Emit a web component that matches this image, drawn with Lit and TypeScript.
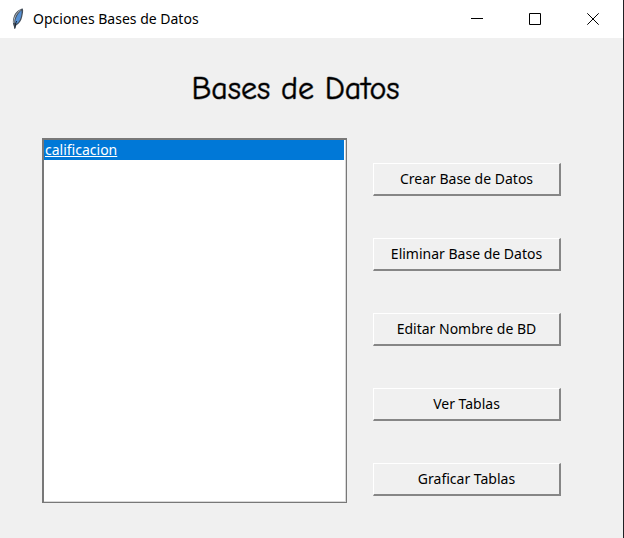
import { LitElement, html, css } from "lit";
import { customElement, state } from "lit/decorators.js";

const ACTIONS = [
  "Crear Base de Datos",
  "Eliminar Base de Datos",
  "Editar Nombre de BD",
  "Ver Tablas",
  "Graficar Tablas",
];

@customElement("title-bar")
class TitleBar extends LitElement {
  static styles = css`
    :host {
      display: flex;
      align-items: center;
      height: 38px;
      padding-right: 1px;
      background: #fff;
      color: #000;
    }
    .feather {
      flex: none;
      width: 16px;
      height: 22px;
      margin: 0 7px 0 10px;
    }
    .caption {
      flex: 1;
      font: 14px/20px "Noto Sans", "Open Sans", sans-serif;
      white-space: nowrap;
    }
    .control {
      display: flex;
      align-items: center;
      justify-content: center;
      width: 58px;
      height: 38px;
      padding: 0;
      border: 0;
      background: none;
    }
    .glyph {
      width: 12px;
      height: 12px;
      fill: none;
      stroke: #000;
    }
  `;

  render() {
    return html`
      <svg class="feather" viewBox="0 0 16 22" aria-hidden="true">
        <path d="M12.8 0.6C9 1.2 5 4.4 3.6 9.2C2.6 12.4 2.6 15.4 3.6 17.8L4.8 21L6.2 17.6C9.6 15.6 11.4 12.6 12.2 8.8C12.8 6 13.6 3 12.8 0.6Z" fill="#46505c" />
        <path d="M11.4 2.4C8.4 4.8 5.6 9.4 5 14.4L6.4 16C9.4 13.6 10.8 10.4 11.2 7.4C11.6 5 11.8 4 11.4 2.4Z" fill="#5590d4" />
        <path d="M10.6 2C6.6 4.6 3.8 9.6 3.8 15" fill="none" stroke="#b4bac0" />
        <path d="M6.6 13C5.8 15 5.2 17.4 4.8 20.6" fill="none" stroke="#17202c" />
      </svg>
      <span class="caption">Opciones Bases de Datos</span>
      <button class="control" aria-label="Minimizar">
        <svg class="glyph" viewBox="0 0 12 12"><path d="M0 5.5H12" /></svg>
      </button>
      <button class="control" aria-label="Maximizar">
        <svg class="glyph" viewBox="0 0 12 12"><path d="M.5 .5H11.5V11.5H.5Z" /></svg>
      </button>
      <button class="control" aria-label="Cerrar">
        <svg class="glyph" viewBox="0 0 12 12"><path d="M.3 .3L11.7 11.7M11.7 .3L.3 11.7" /></svg>
      </button>
    `;
  }
}

@customElement("app-root")
class AppRoot extends LitElement {
  @state() private databases = ["calificacion"];

  static styles = css`
    :host {
      display: block;
      box-sizing: border-box;
      min-height: 100vh;
      border-right: 1px solid #202124;
      background: #f0f0f0;
      color: #000;
    }
    .heading {
      margin: 0;
      padding: 30px 32px 28px 0;
      font: 400 32px/42px "Comic Sans MS", "Comic Neue", "Open Sans", sans-serif;
      -webkit-text-stroke: 1px rgb(0 0 0 / 50%);
      text-align: center;
    }
    .content {
      display: flex;
      gap: 26px;
      padding: 0 62px 35px 42px;
    }
    .list {
      flex: 1;
      min-width: 0;
      box-sizing: border-box;
      padding: 0 2px 1px 0;
      border: solid #787878;
      border-width: 2px 1px 1px 2px;
      border-radius: 0;
      box-shadow: inset -1px -1px #d8d8d8;
      outline: 0;
      background: #fff;
      font: 14px/21px "Noto Sans", "Open Sans", sans-serif;
      overflow: hidden;
    }
    .item {
      min-height: 20px;
      padding: 0 1px;
      color: #000;
    }
    .item:checked {
      background: #0078d7 linear-gradient(#0078d7, #0078d7);
      color: #fff;
      text-decoration: underline;
    }
    .actions {
      display: flex;
      flex-direction: column;
      gap: 42px;
      width: 188px;
      padding: 25px 0 7px;
    }
    .action {
      height: 33px;
      padding: 0;
      border: solid;
      border-width: 1px 2px 2px 1px;
      border-color: #fff #868686 #868686 #fff;
      border-radius: 0;
      background: #f0f0f0;
      color: #000;
      font: 14px/20px "Noto Sans", "Open Sans", sans-serif;
    }
  `;

  render() {
    return html`
      <title-bar></title-bar>
      <main>
        <h1 class="heading">Bases de Datos</h1>
        <div class="content">
          <select class="list" size="17" aria-label="Bases de Datos">
            ${this.databases.map(
              (name, i) => html`<option class="item" ?selected=${i === 0}>${name}</option>`
            )}
          </select>
          <div class="actions">
            ${ACTIONS.map((label) => html`<button class="action">${label}</button>`)}
          </div>
        </div>
      </main>
    `;
  }
}
